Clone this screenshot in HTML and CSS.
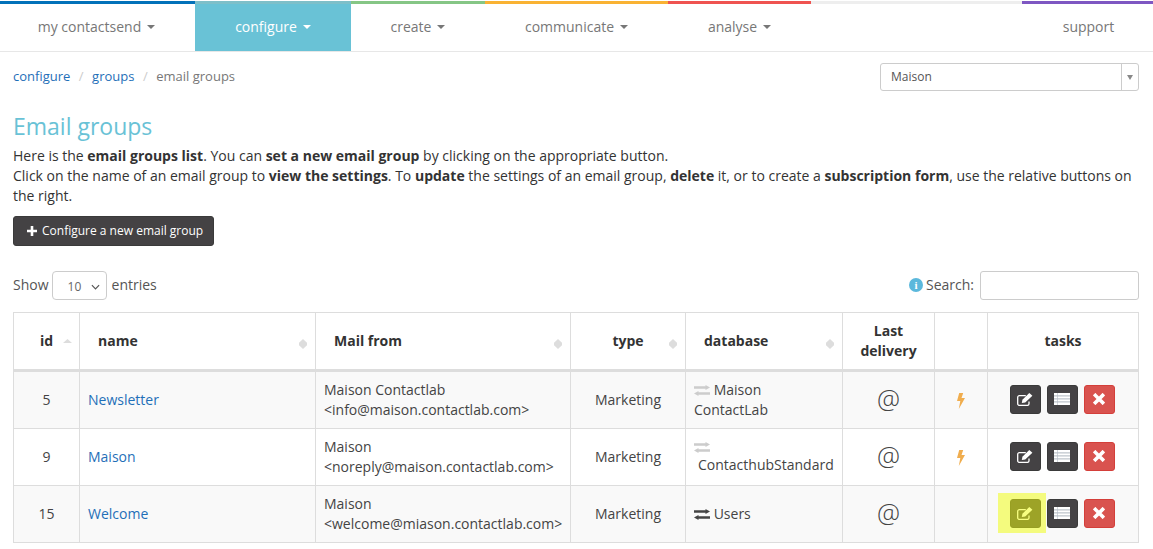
FILE: index.html
```html
<!DOCTYPE html>
<html lang="en">
<head>
<meta charset="utf-8">
<title>Email groups</title>
<link rel="stylesheet" href="styles.css">
</head>
<body>
<svg class="defs" width="0" height="0" aria-hidden="true">
  <defs>
    <symbol id="i-edit" viewBox="0 0 16 13">
      <path d="M12 8.500v2.200a1.700 1.700 0 0 1-1.700 1.700H2.400A1.700 1.700 0 0 1 .7 10.700V4.300A1.700 1.700 0 0 1 2.400 2.600h6.400" fill="none" stroke="currentColor" stroke-width="1.300"/>
      <path d="M4.800 10l.6-3.300L12.300 0l3.100 2.800-7.200 6.800z" fill="currentColor"/>
    </symbol>
    <symbol id="i-list" viewBox="0 0 16 12">
      <path d="M0 0h16v12H0z" fill="currentColor"/>
      <path d="M0 2.900h16M0 5.900h16M0 8.900h16" stroke="#9aa3ae" stroke-width=".8"/>
      <path d="M3.500 0v12" stroke="#b6bcc6" stroke-width=".6"/>
    </symbol>
    <symbol id="i-x" viewBox="0 0 10 10">
      <path d="M2 2l6 6M8 2l-6 6" stroke="currentColor" stroke-width="3" stroke-linecap="square" fill="none"/>
    </symbol>
    <symbol id="i-swap" viewBox="0 0 16 11">
      <path d="M0 1.300h11.500V0L16 2.500 11.500 5V3.700H0zM16 7.300v2.400H4.500V11L0 8.500 4.500 6v1.300z" fill="currentColor"/>
    </symbol>
    <symbol id="i-bolt" viewBox="0 0 8 16">
      <path d="M2.200 0h4L4.500 5H8L1.800 16l1.500-8H0z" fill="currentColor"/>
    </symbol>
  </defs>
</svg>

<nav class="nav">
  <a class="nav-item blue">my contactsend<i class="caret"></i></a>
  <a class="nav-item teal active">configure<i class="caret"></i></a>
  <a class="nav-item green">create<i class="caret"></i></a>
  <a class="nav-item orange">communicate<i class="caret"></i></a>
  <a class="nav-item red">analyse<i class="caret"></i></a>
  <span class="nav-gap"></span>
  <a class="nav-item purple">support</a>
</nav>

<main class="page">
  <div class="crumb-row">
    <ol class="crumbs">
      <li><a href="#">configure</a></li>
      <li class="sep">/</li>
      <li><a href="#">groups</a></li>
      <li class="sep">/</li>
      <li class="here">email groups</li>
    </ol>
    <div class="combo"><span class="combo-text">Maison</span><span class="combo-arrow"><i></i></span></div>
  </div>

  <h1>Email groups</h1>
  <p class="intro">Here is the <b>email groups list</b>. You can <b>set a new email group</b> by clicking on the appropriate button.<br>Click on the name of an email group to <b>view the settings</b>. To <b>update</b> the settings of an email group, <b>delete</b> it, or to create a <b>subscription form</b>, use the relative buttons on the right.</p>

  <button class="add-btn"><svg class="plus" viewBox="0 0 10 10"><path d="M3.700 0h2.600v3.700H10v2.600H6.300V10H3.700V6.300H0V3.700h3.700z" fill="currentColor"/></svg>Configure a new email group</button>

  <div class="controls">
    <label class="show">Show <span class="entries"><span>10</span><svg viewBox="0 0 10 6"><path d="M1 1l4 4 4-4" fill="none" stroke="currentColor" stroke-width="1.300"/></svg></span> entries</label>
    <label class="search"><span class="info">i</span> Search: <input type="text"></label>
  </div>

  <table class="grid">
    <colgroup>
      <col class="c-id"><col class="c-name"><col class="c-mail"><col class="c-type"><col class="c-db"><col class="c-last"><col class="c-bolt"><col class="c-tasks">
    </colgroup>
    <thead>
      <tr>
        <th class="sort sort-up center">id</th>
        <th class="sort pad">name</th>
        <th class="sort pad">Mail from</th>
        <th class="sort center">type</th>
        <th class="sort pad-db">database</th>
        <th class="center">Last delivery</th>
        <th></th>
        <th class="center">tasks</th>
      </tr>
    </thead>
    <tbody>
      <tr>
        <td class="center">5</td>
        <td><a href="#">Newsletter</a></td>
        <td>Maison Contactlab<br>&lt;info@maison.contactlab.com&gt;</td>
        <td class="center">Marketing</td>
        <td><svg class="swap off"><use href="#i-swap"/></svg> Maison ContactLab</td>
        <td class="center at">@</td>
        <td class="center"><svg class="bolt"><use href="#i-bolt"/></svg></td>
        <td class="center"><div class="tasks">
          <span class="tbtn dark"><svg class="ic-edit"><use href="#i-edit"/></svg></span>
          <span class="tbtn dark"><svg class="ic-list"><use href="#i-list"/></svg></span>
          <span class="tbtn danger"><svg class="ic-x"><use href="#i-x"/></svg></span>
        </div></td>
      </tr>
      <tr>
        <td class="center">9</td>
        <td><a href="#">Maison</a></td>
        <td>Maison<br>&lt;noreply@maison.contactlab.com&gt;</td>
        <td class="center">Marketing</td>
        <td class="hub-cell"><svg class="swap off"><use href="#i-swap"/></svg> <span class="hub">ContacthubStandard</span></td>
        <td class="center at">@</td>
        <td class="center"><svg class="bolt"><use href="#i-bolt"/></svg></td>
        <td class="center"><div class="tasks">
          <span class="tbtn dark"><svg class="ic-edit"><use href="#i-edit"/></svg></span>
          <span class="tbtn dark"><svg class="ic-list"><use href="#i-list"/></svg></span>
          <span class="tbtn danger"><svg class="ic-x"><use href="#i-x"/></svg></span>
        </div></td>
      </tr>
      <tr>
        <td class="center">15</td>
        <td><a href="#">Welcome</a></td>
        <td>Maison<br>&lt;welcome@miason.contactlab.com&gt;</td>
        <td class="center">Marketing</td>
        <td><svg class="swap"><use href="#i-swap"/></svg> Users</td>
        <td class="center at">@</td>
        <td class="center"></td>
        <td class="center"><div class="tasks">
          <span class="tbtn dark marked"><svg class="ic-edit"><use href="#i-edit"/></svg></span>
          <span class="tbtn dark"><svg class="ic-list"><use href="#i-list"/></svg></span>
          <span class="tbtn danger"><svg class="ic-x"><use href="#i-x"/></svg></span>
        </div></td>
      </tr>
    </tbody>
  </table>
</main>
</body>
</html>
```
FILE: styles.css
```css
* { box-sizing: border-box; }
html, body { margin: 0; padding: 0; }
body {
  font-family: "Open Sans", sans-serif;
  font-size: 14px;
  line-height: 20px;
  color: #333;
  background: #fff;
  overflow: hidden;
}
.defs { position: absolute; }
a { color: #1f6fb8; text-decoration: none; }

.nav {
  display: flex;
  height: 52px;
  padding-top: 1px;
  border-bottom: 1px solid #e7e7e7;
}
.nav-item {
  display: flex;
  align-items: center;
  justify-content: center;
  height: 50px;
  border-top: 3px solid;
  padding-bottom: 1px;
  color: #777;
}
.blue { width: 195px; padding-right: 2px; border-top-color: #0271b9; }
.teal { width: 156px; border-top-color: #7ebfc9; }
.green { width: 134px; border-top-color: #85c685; }
.orange { width: 183px; border-top-color: #f9b233; }
.red { width: 143px; border-top-color: #ef5350; }
.purple { width: 131px; padding-left: 2px; border-top-color: #7e57c2; }
.nav-gap { flex: 1; height: 3px; background: #eee; }
.active { background: #69c2d6; color: #fff; }
.caret {
  display: inline-block;
  margin-left: 6px;
  border-top: 4px solid currentColor;
  border-left: 4px solid transparent;
  border-right: 4px solid transparent;
}

.page { padding: 0 14px 0 13px; }

.crumb-row {
  display: flex;
  justify-content: space-between;
  align-items: center;
  height: 28px;
  margin-top: 11px;
}
.crumbs {
  display: flex;
  gap: 8.5px;
  list-style: none;
  margin: 0 0 2px;
  padding: 0;
  font-size: 13px;
}
.sep { color: #ccc; }
.here { color: #777; }
.combo {
  display: flex;
  width: 259px;
  height: 28px;
  border: 1px solid #ccc;
  border-radius: 3px;
  font-size: 12px;
  line-height: 26px;
  color: #555;
}
.combo-text { flex: 1; padding-left: 10px; }
.combo-arrow {
  display: flex;
  align-items: center;
  justify-content: center;
  width: 17px;
  border-left: 1px solid #ccc;
}
.combo-arrow i {
  border-top: 5px solid #888;
  border-left: 3px solid transparent;
  border-right: 3px solid transparent;
}

h1 {
  margin: 20px 0 0;
  font-size: 23px;
  font-weight: 400;
  line-height: 30px;
  color: #69c2d6;
}
.intro { margin: 5px 0 0; }

.add-btn {
  display: flex;
  align-items: center;
  gap: 5px;
  height: 30px;
  margin-top: 10px;
  padding: 0 10px 0 13px;
  border: 1px solid #3a3a3a;
  border-radius: 3px;
  background: #444244;
  color: #fff;
  font: 12px/18px "Open Sans", sans-serif;
}
.plus { width: 10px; height: 10px; }

.controls {
  display: flex;
  justify-content: space-between;
  align-items: flex-start;
  height: 29px;
  margin-top: 25px;
}
.show, .search {
  display: flex;
  align-items: center;
  gap: 3px;
  height: 29px;
  padding-bottom: 2px;
  color: #555;
}
.entries {
  display: flex;
  align-items: center;
  justify-content: space-between;
  align-self: flex-start;
  width: 55px;
  height: 29px;
  margin-right: 2px;
  padding: 2px 6px 0 15px;
  border: 1px solid #ccc;
  border-radius: 4px;
  font-size: 12px;
  color: #666;
}
.entries svg { width: 9px; height: 6px; color: #555; }
.info {
  display: inline-flex;
  align-items: center;
  justify-content: center;
  width: 14px;
  height: 14px;
  border-radius: 50%;
  background: #5bb8dc;
  color: #fff;
  font: bold 11px/14px "Liberation Serif", serif;
}
.search input {
  align-self: flex-start;
  width: 159px;
  height: 29px;
  margin-left: 3px;
  border: 1px solid #ccc;
  border-radius: 3px;
}

.grid {
  table-layout: fixed;
  width: 1125px;
  margin-top: 12px;
  border-collapse: collapse;
  border: 1px solid #ddd;
}
.c-id { width: 66px; }
.c-name { width: 236px; }
.c-mail { width: 255px; }
.c-type { width: 115px; }
.c-db { width: 157px; }
.c-last { width: 92px; }
.c-bolt { width: 53px; }
.c-tasks { width: 151px; }

th, td { border: 1px solid #ddd; padding: 8px; }
th {
  position: relative;
  height: 58px;
  border-bottom: 3px solid #ddd;
  font-weight: 700;
  text-align: left;
  color: #333;
}
td { height: 57px; vertical-align: middle; color: #444; }
tbody tr { background: #f9f9f9; }
tbody tr:nth-child(2) { background: #fff; }
.center { text-align: center; }
.pad { padding-left: 18px; }
.pad-db { padding-left: 18px; }
.sort::after {
  content: "";
  position: absolute;
  right: 8px;
  top: 26px;
  width: 8px;
  height: 10px;
  background: #ddd;
  clip-path: polygon(50% 0, 100% 38%, 100% 62%, 50% 100%, 0 62%, 0 38%);
}
.sort-up::after {
  right: 7px;
  width: 9px;
  height: 4px;
  clip-path: polygon(50% 0, 100% 100%, 0 100%);
}
td.at { padding-bottom: 12px; font-size: 26px; font-weight: 300; color: #444; }
.swap { width: 16px; height: 11px; vertical-align: -1px; color: #444; }
.swap.off { color: #ccc; }
td.hub-cell { padding-bottom: 10px; line-height: 18px; }
.hub { display: inline-block; padding-left: 4px; }
.bolt { display: inline-block; width: 8px; height: 16px; color: #f0ad4e; vertical-align: middle; }

.tasks { display: flex; justify-content: center; gap: 6px; margin-bottom: 2px; padding-right: 2px; }
.tbtn {
  position: relative;
  display: flex;
  align-items: center;
  justify-content: center;
  width: 31px;
  height: 29px;
  border-radius: 3px;
  color: #fff;
}
.dark { background: #444244; border: 1px solid #3a3a3a; }
.danger { background: #d9534f; border: 1px solid #d43f3a; }
.ic-edit { width: 16px; height: 13px; }
.ic-list { width: 16px; height: 12px; }
.ic-x { width: 12px; height: 12px; }
.marked::after {
  content: "";
  position: absolute;
  left: -13px;
  top: -7px;
  width: 48px;
  height: 40px;
  background: rgba(240, 254, 13, .52);
}
```
